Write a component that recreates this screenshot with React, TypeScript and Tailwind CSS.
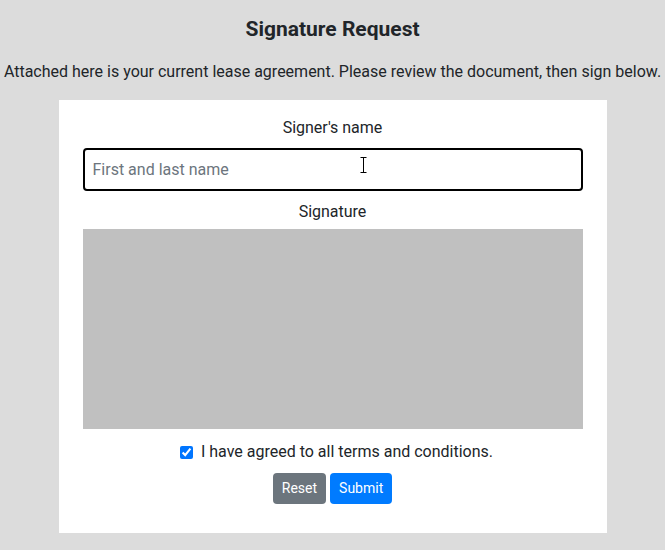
import { useState } from "react";

export default function App() {
  const [name, setName] = useState("");
  const [agreed, setAgreed] = useState(true);

  return (
    <div className="min-h-[550px] bg-[#dcdcdc] text-[#212529] font-['Roboto',sans-serif] pt-[17px]">
      <h1 className="text-center text-[21px] leading-[24px] font-bold">Signature Request</h1>
      <p className="mt-[19px] text-center text-[16px] leading-[24px] whitespace-nowrap">
        Attached here is your current lease agreement. Please review the document, then sign below.
      </p>

      <div className="mx-auto mt-[16px] w-[548px] bg-white px-[24px] pt-[16px] pb-[29px] flex flex-col items-center">
        <label className="text-[16px] leading-[24px]">Signer's name</label>
        <div className="relative mt-[8px] w-full">
          <input
            value={name}
            onChange={(e) => setName(e.target.value)}
            placeholder="First and last name"
            className="w-full h-[43px] border-2 border-black rounded-[4px] px-[8px] text-[16px] outline-none placeholder:text-[#6c757d]"
          />
          {/* mouse cursor in the screenshot */}
          <svg className="absolute left-[277px] top-[9px] pointer-events-none" width="7" height="16" viewBox="0 0 7 16">
            <path d="M0.5 0.5h6M3.5 0.5v15M0.5 15.5h6" stroke="#000" strokeWidth="1" fill="none" />
          </svg>
        </div>

        <label className="mt-[9px] text-[16px] leading-[24px]">Signature</label>
        <div className="mt-[5px] w-full h-[200px] bg-[#c0c0c0]" />

        <label className="mt-[11px] pl-[8px] flex items-center gap-[8px] text-[16px] leading-[24px]">
          <input
            type="checkbox"
            checked={agreed}
            onChange={(e) => setAgreed(e.target.checked)}
            className="w-[13px] h-[13px] accent-[#0075ff]"
          />
          I have agreed to all terms and conditions.
        </label>

        <div className="mt-[9px] flex gap-[4px]">
          <button className="h-[31px] px-[9px] rounded-[4px] bg-[#6c757d] text-white text-[14px]">Reset</button>
          <button className="h-[31px] px-[9px] rounded-[4px] bg-[#007bff] text-white text-[14px]">Submit</button>
        </div>
      </div>
    </div>
  );
}
